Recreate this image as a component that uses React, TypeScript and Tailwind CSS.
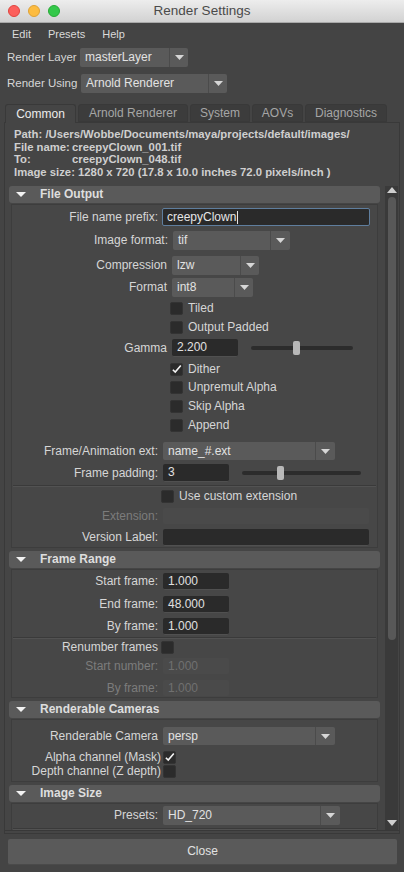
import React from 'react';

const Arrow = ({ color = '#d6d6d6' }: { color?: string }) => (
  <svg width="9" height="5" viewBox="0 0 9 5">
    <path d="M0 0H9L4.5 5Z" fill={color} />
  </svg>
);

const Tick = () => (
  <svg width="13" height="13" viewBox="0 0 13 13" className="block">
    <path d="M2.2 6.8L5 9.6L11.6 1.8" fill="none" stroke="#f4f4f4" strokeWidth="1.9" />
  </svg>
);

function Dropdown({ value, className, arrow }: { value: string; className: string; arrow: string }) {
  return (
    <div className={`flex rounded-[2px] bg-[#5a5a5a] ${className}`}>
      <span className="flex flex-1 items-center pl-[5px] text-[12px] text-[#e2e2e2]">{value}</span>
      <span className={`flex items-center justify-center border-l border-[#4b4b4b] ${arrow}`}>
        <Arrow />
      </span>
    </div>
  );
}

function Check({ checked = false, className = '' }: { checked?: boolean; className?: string }) {
  return (
    <span className={`flex h-[13px] w-[13px] shrink-0 items-center justify-center rounded-[2px] border border-[#333] bg-[#2b2b2b] ${className}`}>
      {checked && <Tick />}
    </span>
  );
}

function Field({ value = '', className, disabled = false }: { value?: string; className: string; disabled?: boolean }) {
  return (
    <div
      className={`flex items-center rounded-[2px] pl-[5px] text-[12px] ${
        disabled ? 'bg-[#4a4a4a] text-[#707070]' : 'bg-[#2a2a2a] text-[#e0e0e0] border-b border-[#505050]'
      } ${className}`}
    >
      {value}
    </div>
  );
}

function Slider({ className, thumb }: { className: string; thumb: string }) {
  return (
    <div className={`relative h-[14px] ${className}`}>
      <div className="absolute left-0 right-0 top-[5px] h-[4px] rounded-full bg-[#2c2c2c]" />
      <div className={`absolute top-0 h-[14px] w-[7px] rounded-[2px] bg-[#b8b8b8] ${thumb}`} />
    </div>
  );
}

function Header({ title, className = '' }: { title: string; className?: string }) {
  return (
    <div className={`flex h-[17px] shrink-0 items-center rounded-[3px] bg-[#5a5a5a] ${className}`}>
      <svg className="ml-[7px]" width="10" height="5" viewBox="0 0 10 5">
        <path d="M0 0H10L5 5Z" fill="#f2f2f2" />
      </svg>
      <span className="ml-[14px] text-[12px] font-bold text-[#dedede]">{title}</span>
    </div>
  );
}

function Body({ children, className = '' }: { children: React.ReactNode; className?: string }) {
  return (
    <div className={`mx-[2px] mt-[1px] flex shrink-0 flex-col bg-[#474747] shadow-[inset_0_0_0_1px_#3d3d3d] ${className}`}>
      {children}
    </div>
  );
}

const Sep = ({ className }: { className: string }) => (
  <div className={`mx-[2px] h-[2px] border-t border-b border-t-[#3a3a3a] border-b-[#525252] ${className}`} />
);

function CheckRow({ label, checked, className }: { label: string; checked?: boolean; className: string }) {
  return (
    <div className={`flex items-center ${className}`}>
      <Check checked={checked} className="ml-[159px]" />
      <span className="ml-[5px] text-[12px] text-[#d6d6d6]">{label}</span>
    </div>
  );
}

const tabs = ['Arnold Renderer', 'System', 'AOVs', 'Diagnostics'];
const tabWidths = ['w-[110px]', 'w-[60px]', 'w-[51px]', 'w-[82px]'];

export default function App() {
  return (
    <div className="flex h-[872px] w-[404px] flex-col overflow-hidden bg-[#444444] font-['Liberation_Sans',Arial,sans-serif] leading-[13px] text-[#d6d6d6]">
      {/* title bar */}
      <div className="grid h-[23px] shrink-0 grid-cols-[1fr_auto_1fr] items-center border-b border-[#a9a9a9] bg-gradient-to-b from-[#ededed] to-[#d2d2d2]">
        <div className="flex gap-[8px] pl-[8px]">
          <span className="h-[12px] w-[12px] rounded-full border border-[#e0443e] bg-[#fc605c]" />
          <span className="h-[12px] w-[12px] rounded-full border border-[#dea236] bg-[#fdbc40]" />
          <span className="h-[12px] w-[12px] rounded-full border border-[#27aa35] bg-[#34c84a]" />
        </div>
        <span className="text-[13.5px] leading-[16px] text-[#4a4a4a]">Render Settings</span>
        <div />
      </div>

      {/* menu */}
      <div className="flex h-[23px] shrink-0 items-center gap-[17px] pl-[12px] text-[11px] text-[#dadada]">
        <span>Edit</span>
        <span>Presets</span>
        <span>Help</span>
      </div>

      <div className="mt-[2px] flex shrink-0 items-center pl-[7px]">
        <span className="w-[73px] text-[11.5px]">Render Layer</span>
        <Dropdown value="masterLayer" className="h-[19px] w-[108px]" arrow="w-[19px]" />
      </div>
      <div className="mt-[7px] flex shrink-0 items-center pl-[7px]">
        <span className="w-[74px] text-[11.5px]">Render Using</span>
        <Dropdown value="Arnold Renderer" className="h-[19px] w-[146px]" arrow="w-[19px]" />
      </div>

      {/* tabs */}
      <div className="mt-[11px] flex shrink-0 gap-[2px] pl-[5px]">
        <div className="relative z-10 -mb-px flex h-[19px] w-[71px] items-center justify-center rounded-t-[3px] border border-b-0 border-[#393939] bg-[#454545] text-[12px] text-[#ececec]">
          Common
        </div>
        {tabs.map((t, i) => (
          <div
            key={t}
            className={`flex h-[18px] items-center justify-center rounded-t-[3px] border border-[#393939] bg-[#3c3c3c] text-[12px] text-[#a6a6a6] ${tabWidths[i]}`}
          >
            {t}
          </div>
        ))}
      </div>

      {/* tab panel */}
      <div className="mx-[4px] flex shrink-0 flex-col border border-[#393939] bg-[#454545] pb-[2px]">
        <div className="flex h-[63px] flex-col pl-[9px] pt-[5px] text-[11.3px] font-bold leading-[12.6px] text-[#cfcfcf]">
          <span>Path: /Users/Wobbe/Documents/maya/projects/default/images/</span>
          <span className="flex">
            <span className="w-[58px]">File name:</span>creepyClown_001.tif
          </span>
          <span className="flex">
            <span className="w-[58px]">To:</span>creepyClown_048.tif
          </span>
          <span>Image size: 1280 x 720 (17.8 x 10.0 inches 72.0 pixels/inch )</span>
        </div>

        <div className="flex h-[645px] border-b border-[#383838]">
          <div className="ml-[4px] flex w-[371px] flex-col overflow-hidden">
            <Header title="File Output" />
            <Body className="pb-[2px]">
              <div className="mt-[4px] flex items-center">
                <span className="w-[147px] text-right text-[12px]">File name prefix:</span>
                <div className="ml-[4px] flex h-[18px] w-[208px] items-center rounded-[2px] border border-[#5f7e9e] bg-[#2a2a2a] pl-[4px] text-[12px] text-[#e6e6e6]">
                  creepyClown
                  <span className="ml-px h-[13px] w-px bg-[#e6e6e6]" />
                </div>
              </div>
              <div className="mt-[5px] flex items-center">
                <span className="w-[157px] text-right text-[12px]">Image format:</span>
                <Dropdown value="tif" className="ml-[5px] h-[19px] w-[117px]" arrow="w-[20px]" />
              </div>
              <div className="mt-[6px] flex items-center">
                <span className="w-[156px] text-right text-[12px]">Compression</span>
                <Dropdown value="lzw" className="ml-[5px] h-[19px] w-[87px]" arrow="w-[19px]" />
              </div>
              <div className="mt-[3px] flex items-center">
                <span className="w-[156px] text-right text-[12px]">Format</span>
                <Dropdown value="int8" className="ml-[5px] h-[19px] w-[81px]" arrow="w-[19px]" />
              </div>
              <CheckRow label="Tiled" className="mt-[5px]" />
              <CheckRow label="Output Padded" className="mt-[6px]" />
              <div className="mt-[5px] flex items-center">
                <span className="w-[156px] text-right text-[12px]">Gamma</span>
                <Field value="2.200" className="ml-[5px] h-[18px] w-[66px]" />
                <Slider className="ml-[13px] w-[102px]" thumb="left-[42px]" />
              </div>
              <CheckRow label="Dither" checked className="mt-[6px]" />
              <CheckRow label="Unpremult Alpha" className="mt-[5px]" />
              <CheckRow label="Skip Alpha" className="mt-[6px]" />
              <CheckRow label="Append" className="mt-[6px]" />
              <div className="mt-[10px] flex items-center">
                <span className="w-[147px] text-right text-[12px]">Frame/Animation ext:</span>
                <Dropdown value="name_#.ext" className="ml-[5px] h-[18px] w-[172px]" arrow="w-[20px]" />
              </div>
              <div className="mt-[4px] flex items-center">
                <span className="w-[147px] text-right text-[12px]">Frame padding:</span>
                <Field value="3" className="ml-[5px] h-[18px] w-[66px]" />
                <Slider className="ml-[13px] w-[119px]" thumb="left-[35px]" />
              </div>
              <Sep className="mt-[3px]" />
              <div className="mt-[3px] flex items-center">
                <Check className="ml-[150px]" />
                <span className="ml-[5px] text-[12px]">Use custom extension</span>
              </div>
              <div className="mt-[5px] flex items-center">
                <span className="w-[147px] text-right text-[12px] text-[#7c7c7c]">Extension:</span>
                <Field disabled className="ml-[5px] h-[16px] w-[206px]" />
              </div>
              <div className="mt-[5px] flex items-center">
                <span className="w-[147px] text-right text-[12px]">Version Label:</span>
                <Field className="ml-[5px] h-[17px] w-[206px]" />
              </div>
            </Body>

            <Header title="Frame Range" className="mt-[3px]" />
            <Body className="pb-[2px]">
              <div className="mt-[4px] flex items-center">
                <span className="w-[147px] text-right text-[12px]">Start frame:</span>
                <Field value="1.000" className="ml-[5px] h-[17px] w-[66px]" />
              </div>
              <div className="mt-[6px] flex items-center">
                <span className="w-[147px] text-right text-[12px]">End frame:</span>
                <Field value="48.000" className="ml-[5px] h-[17px] w-[66px]" />
              </div>
              <div className="mt-[5px] flex items-center">
                <span className="w-[147px] text-right text-[12px]">By frame:</span>
                <Field value="1.000" className="ml-[5px] h-[17px] w-[66px]" />
              </div>
              <Sep className="mt-[2px]" />
              <div className="mt-[2px] flex items-center">
                <span className="w-[147px] text-right text-[12px]">Renumber frames</span>
                <Check className="ml-[3px]" />
              </div>
              <div className="mt-[4px] flex items-center">
                <span className="w-[147px] text-right text-[12px] text-[#7c7c7c]">Start number:</span>
                <Field disabled value="1.000" className="ml-[5px] h-[16px] w-[66px]" />
              </div>
              <div className="mt-[6px] flex items-center">
                <span className="w-[147px] text-right text-[12px] text-[#7c7c7c]">By frame:</span>
                <Field disabled value="1.000" className="ml-[5px] h-[16px] w-[66px]" />
              </div>
            </Body>

            <Header title="Renderable Cameras" className="mt-[3px]" />
            <Body className="pb-[4px]">
              <div className="mt-[8px] flex items-center">
                <span className="w-[147px] text-right text-[12px]">Renderable Camera</span>
                <Dropdown value="persp" className="ml-[5px] h-[18px] w-[172px]" arrow="w-[20px]" />
              </div>
              <div className="mt-[6px] flex items-center">
                <span className="w-[150px] text-right text-[12px]">Alpha channel (Mask)</span>
                <Check checked className="ml-[2px]" />
              </div>
              <div className="mt-[1px] flex items-center">
                <span className="w-[150px] text-right text-[12px]">Depth channel (Z depth)</span>
                <Check className="ml-[2px]" />
              </div>
            </Body>

            <Header title="Image Size" className="mt-[3px]" />
            <Body className="pb-[4px]">
              <div className="mt-[3px] flex items-center">
                <span className="w-[147px] text-right text-[12px]">Presets:</span>
                <Dropdown value="HD_720" className="ml-[5px] h-[19px] w-[177px]" arrow="w-[20px]" />
              </div>
              <Sep className="mt-[3px]" />
              <div className="h-[20px]" />
            </Body>
          </div>

          {/* scrollbar */}
          <div className="ml-[5px] flex w-[13px] flex-col items-center bg-[#3a3a3a]">
            <svg className="mt-[1px]" width="10" height="6" viewBox="0 0 10 6">
              <path d="M0 6H10L5 0Z" fill="#cfcfcf" />
            </svg>
            <div className="mt-[4px] h-[443px] w-[8px] rounded-full bg-[#585858]" />
            <div className="flex-1" />
            <svg className="mb-[4px]" width="10" height="6" viewBox="0 0 10 6">
              <path d="M0 0H10L5 6Z" fill="#cfcfcf" />
            </svg>
          </div>
        </div>
      </div>

      <button className="mx-[8px] mt-[5px] flex h-[26px] w-[389px] shrink-0 items-center justify-center rounded-[2px] border-b border-[#4a4a4a] bg-[#5a5a5a] text-[12px] text-[#e2e2e2]">
        Close
      </button>
    </div>
  );
}
